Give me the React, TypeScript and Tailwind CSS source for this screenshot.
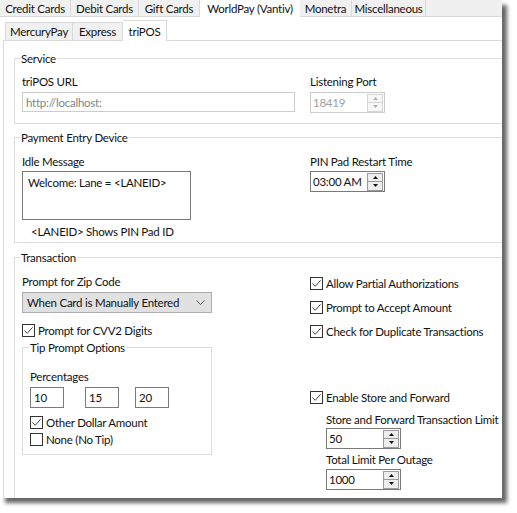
import React from "react";

const FONT = { fontFamily: 'Lato, "Noto Sans", "DejaVu Sans", sans-serif' };

function Check({ checked, label }: { checked?: boolean; label: string }) {
    return (
        <div className="flex items-center h-[13px]">
            <span className="w-[13px] h-[13px] shrink-0 border border-[#333333] bg-white flex items-center justify-center">
                {checked && (
                    <svg width="11" height="11" viewBox="0 0 11 11" aria-hidden="true">
                        <path d="M1.5 5.5 L4.2 8.3 L9.6 2.3" fill="none" stroke="#444444" strokeWidth="1" />
                    </svg>
                )}
            </span>
            <span className="ml-[3px] leading-[15px] whitespace-nowrap">{label}</span>
        </div>
    );
}

function Arrow({ up, color }: { up?: boolean; color: string }) {
    return (
        <svg width="5" height="3" viewBox="0 0 5 3" aria-hidden="true">
            <path d={up ? "M0 3 L2.5 0 L5 3 Z" : "M0 0 L5 0 L2.5 3 Z"} fill={color} />
        </svg>
    );
}

function Spinner({ value, disabled }: { value: string; disabled?: boolean }) {
    const btn = disabled
        ? "border-[#d4d4d4] bg-[#f7f7f7]"
        : "border-[#9a9a9a] bg-[#eeeeee]";
    const arrow = disabled ? "#b0b0b0" : "#111111";
    return (
        <div
            className={`w-[75px] h-[21px] border bg-white flex items-center ${disabled ? "border-[#cccccc] text-[#a0a0a0]" : "border-[#7a7a7a]"}`}
        >
            <span className="flex-1 pl-[2px] leading-[15px] whitespace-nowrap">{value}</span>
            <div className="flex flex-col mr-[1px]">
                <div className={`w-[16px] h-[9px] border flex items-center justify-center ${btn}`}>
                    <Arrow up color={arrow} />
                </div>
                <div className={`w-[16px] h-[9px] border border-t-0 flex items-center justify-center ${btn}`}>
                    <Arrow color={arrow} />
                </div>
            </div>
        </div>
    );
}

function Group({ title, className = "", children }: { title: string; className?: string; children: React.ReactNode }) {
    return (
        <fieldset className={`border border-[#dcdcdc] ${className}`}>
            <legend className="ml-[5px] px-[1px] leading-[15px] whitespace-nowrap">{title}</legend>
            {children}
        </fieldset>
    );
}

const topTabs = [
    { label: "Credit Cards", w: "w-[71px]" },
    { label: "Debit Cards", w: "w-[68px]" },
    { label: "Gift Cards", w: "w-[61px]" },
    { label: "WorldPay (Vantiv)", w: "w-[100px]", active: true },
    { label: "Monetra", w: "w-[52px]" },
    { label: "Miscellaneous", w: "w-[74px]" },
];

export default function App() {
    return (
        <div className="w-[517px] h-[513px] bg-white overflow-hidden text-[11.5px] tracking-[-0.25px] text-[#111111]" style={FONT}>
            <div className="w-[502px] h-[498px] bg-white shadow-[5px_5px_4px_rgba(0,0,0,0.6)] overflow-hidden flex flex-col">
                {/* main tab strip */}
                <div className="h-[17px] shrink-0 flex bg-[#f0f0f0] border-b border-[#d9d9d9]">
                    {topTabs.map((t) => (
                        <div
                            key={t.label}
                            className={`${t.w} shrink-0 flex items-center justify-center leading-[15px] whitespace-nowrap ${t.active ? "h-[17px] bg-white" : "h-[16px] border-r border-[#d9d9d9]"}`}
                        >
                            {t.label}
                        </div>
                    ))}
                </div>

                {/* sub tab strip */}
                <div className="h-[24px] shrink-0 ml-[3px] flex items-end pl-[2px] border-b border-[#d9d9d9]">
                    <div className="w-[68px] h-[18px] bg-[#f0f0f0] border-t border-l border-r border-[#d9d9d9] flex items-center justify-center leading-[15px]">
                        MercuryPay
                    </div>
                    <div className="w-[50px] h-[18px] bg-[#f0f0f0] border-t border-r border-[#d9d9d9] flex items-center justify-center leading-[15px]">
                        Express
                    </div>
                    <div className="relative w-[44px] h-[21px] mb-[-1px] bg-white border-t border-r border-[#d9d9d9] flex items-center justify-center leading-[15px]">
                        triPOS
                    </div>
                </div>

                {/* tab page */}
                <div className="flex-1 ml-[3px] border-l border-[#d9d9d9] pl-[10px] flex flex-col">
                    <Group title="Service" className="mt-[10px] w-[520px] shrink-0">
                        <div className="flex pl-[7px] pb-[10px]">
                            <div className="w-[288px] shrink-0 flex flex-col">
                                <div className="mt-[8px] leading-[15px]">triPOS URL</div>
                                <div className="mt-[3px] w-[273px] h-[20px] border border-[#cccccc] flex items-center pl-[3px] text-[#838383] leading-[15px]">
                                    http://localhost:
                                </div>
                            </div>
                            <div className="flex flex-col">
                                <div className="mt-[8px] leading-[15px]">Listening Port</div>
                                <div className="mt-[3px]">
                                    <Spinner value="18419" disabled />
                                </div>
                            </div>
                        </div>
                    </Group>

                    <Group title="Payment Entry Device" className="mt-[6px] w-[520px] shrink-0">
                        <div className="flex pl-[7px] pb-[3px]">
                            <div className="w-[288px] shrink-0 flex flex-col">
                                <div className="mt-[9px] leading-[15px]">Idle Message</div>
                                <div className="mt-[2px] w-[169px] h-[49px] border border-[#7a7a7a] pl-[5px] pt-[3px] leading-[15px] whitespace-nowrap">
                                    Welcome: Lane = &lt;LANEID&gt;
                                </div>
                                <div className="mt-[4px] pl-[9px] leading-[15px] whitespace-nowrap">&lt;LANEID&gt; Shows PIN Pad ID</div>
                            </div>
                            <div className="flex flex-col">
                                <div className="mt-[9px] leading-[15px] whitespace-nowrap">PIN Pad Restart Time</div>
                                <div className="mt-[2px]">
                                    <Spinner value="03:00 AM" />
                                </div>
                            </div>
                        </div>
                    </Group>

                    <Group title="Transaction" className="mt-[7px] w-[520px] shrink-0">
                        <div className="flex pl-[7px] pb-[20px]">
                            <div className="w-[288px] shrink-0 flex flex-col">
                                <div className="mt-[9px] leading-[15px]">Prompt for Zip Code</div>
                                <div className="mt-[3px] w-[190px] h-[21px] border border-[#adadad] bg-[#e1e1e1] flex items-center pl-[4px] pr-[6px] leading-[15px]">
                                    <span className="flex-1 whitespace-nowrap">When Card is Manually Entered</span>
                                    <svg width="9" height="5" viewBox="0 0 9 5" aria-hidden="true">
                                        <path d="M0.5 0.5 L4.5 4.5 L8.5 0.5" fill="none" stroke="#555555" strokeWidth="1" />
                                    </svg>
                                </div>
                                <div className="mt-[11px]">
                                    <Check checked label="Prompt for CVV2 Digits" />
                                </div>
                                <fieldset className="mt-[3px] w-[190px] border border-[#dcdcdc]">
                                    <legend className="ml-[6px] px-[1px] leading-[15px] whitespace-nowrap">Tip Prompt Options</legend>
                                    <div className="flex flex-col pl-[7px] pb-[8px]">
                                        <div className="mt-[14px] leading-[15px]">Percentages</div>
                                        <div className="mt-[3px] flex">
                                            {["10", "15", "20"].map((v, i) => (
                                                <div
                                                    key={v}
                                                    className={`w-[34px] h-[21px] border border-[#7a7a7a] flex items-center pl-[3px] leading-[15px] ${i === 1 ? "ml-[21px]" : i === 2 ? "ml-[16px]" : ""}`}
                                                >
                                                    {v}
                                                </div>
                                            ))}
                                        </div>
                                        <div className="mt-[8px]">
                                            <Check checked label="Other Dollar Amount" />
                                        </div>
                                        <div className="mt-[4px]">
                                            <Check label="None (No Tip)" />
                                        </div>
                                    </div>
                                </fieldset>
                            </div>
                            <div className="flex flex-col">
                                <div className="mt-[12px]">
                                    <Check checked label="Allow Partial Authorizations" />
                                </div>
                                <div className="mt-[11px]">
                                    <Check checked label="Prompt to Accept Amount" />
                                </div>
                                <div className="mt-[11px]">
                                    <Check checked label="Check for Duplicate Transactions" />
                                </div>
                                <div className="mt-[53px]">
                                    <Check checked label="Enable Store and Forward" />
                                </div>
                                <div className="pl-[16px] flex flex-col">
                                    <div className="mt-[8px] leading-[15px] whitespace-nowrap">Store and Forward Transaction Limit</div>
                                    <div className="mt-[1px]">
                                        <Spinner value="50" />
                                    </div>
                                    <div className="mt-[3px] leading-[15px] whitespace-nowrap">Total Limit Per Outage</div>
                                    <div className="mt-[2px]">
                                        <Spinner value="1000" />
                                    </div>
                                </div>
                            </div>
                        </div>
                    </Group>
                </div>
            </div>
        </div>
    );
}
